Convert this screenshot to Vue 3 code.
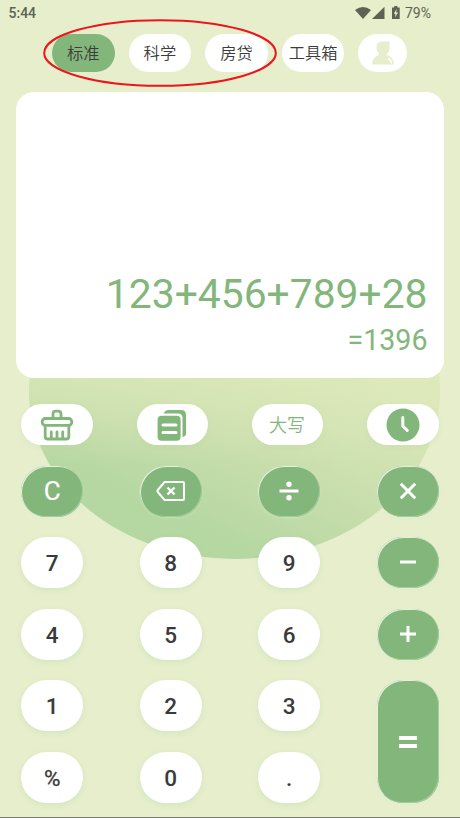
<script setup>
const tabs = ['标准', '科学', '房贷', '工具箱']
const keys = [
  { t: 'C', op: true, cls: 'clear' }, { icon: 'back', op: true }, { icon: 'div', op: true }, { icon: 'mul', op: true },
  { t: '7' }, { t: '8' }, { t: '9' }, { icon: 'sub', op: true },
  { t: '4' }, { t: '5' }, { t: '6' }, { icon: 'add', op: true },
  { t: '1' }, { t: '2' }, { t: '3' }, { icon: 'eq', op: true, cls: 'tall' },
  { t: '%', cls: 'percent' }, { t: '0' }, { t: '.' }
]
</script>

<template>
  <div class="phone">
    <div class="glow"></div>
    <header class="status">
      <span class="time">5:44</span>
      <svg class="signals" width="46" height="16" viewBox="0 0 46 16">
        <path d="M0 4Q8-2.2 16 4L8 13Z" />
        <path d="M17 13H29.5V.7Z" />
        <path d="M37 1.5h2.2V0h3.2v1.5H44.7V13H37Z" />
        <path class="bolt" d="M41.8 2.8 38.8 7.8h1.8l-.7 3.800 3.200-5h-1.900Z" />
      </svg>
      <span class="battery">79%</span>
    </header>

    <nav class="tabs">
      <button v-for="(tab, i) in tabs" :key="tab" class="tab" :class="{ active: i === 0 }">{{ tab }}</button>
      <button class="tab user">
        <svg width="24" height="24" viewBox="0 0 24 24">
          <path d="M5.500 6.500Q5.500 .5 11 .5h7.500V7q0 4-2.500 5.500v1.500q6.500 2 7 9.500H1q.5-7.500 7-9.500v-1.500Q5.500 10.500 5.500 6.500Z" />
          <path class="shine" d="M17 17.500q3.200 1.500 3.500 5" />
        </svg>
      </button>
    </nav>
    <svg class="ring" width="236" height="70" viewBox="0 0 236 70">
      <ellipse cx="118" cy="35" rx="115.800" ry="32.800" />
    </svg>

    <section class="display">
      <div class="expr">123+456+789+28</div>
      <div class="result">=1396</div>
    </section>

    <div class="tools">
      <button class="tool">
        <svg width="34" height="32" viewBox="0 0 34 32" class="line">
          <path d="M13 8.500V5q0-2.800 2.800-2.800h2.400Q21 2.200 21 5v3.500" />
          <rect x="2.200" y="9.500" width="29.600" height="6.800" rx="3" />
          <path d="M5.200 17v10.500q0 2.500 2.500 2.500h18.600q2.500 0 2.500-2.500V17M11.300 23v6.500M17 23v6.500M22.700 23v6.500" />
        </svg>
      </button>
      <button class="tool">
        <svg width="30" height="32" viewBox="0 0 30 32">
          <path class="fill" d="M6.500 4.500Q8 1 11.500 1H24q5 0 5 5v19q0 2-3.500 3V9q0-4.500-4.500-4.500Z" />
          <rect class="fill" x=".6" y="6.700" width="23" height="25" rx="4" />
          <path class="cut" d="M6 16h13M6 23.500h13" />
        </svg>
      </button>
      <button class="tool upper">大写</button>
      <button class="tool">
        <svg width="34" height="34" viewBox="0 0 34 34">
          <circle class="fill" cx="17" cy="17" r="16.500" />
          <path class="cut" d="M16.800 9.500v8.500l4.500 4.500" />
        </svg>
      </button>
    </div>

    <main class="keys">
      <button v-for="(k, i) in keys" :key="i" class="key" :class="[{ op: k.op }, k.cls]">
        <span v-if="k.t">{{ k.t }}</span>
        <svg v-else width="30" height="24" viewBox="0 0 30 24">
          <g v-if="k.icon === 'back'" class="thin">
            <path d="M8.500 3H27q1 0 1 1v16q0 1-1 1H8.500L1.800 13q-.8-1 0-2Z" />
            <path class="cross" d="m11.500 8.500 7 7m0-7-7 7" />
          </g>
          <g v-else-if="k.icon === 'div'">
            <path d="M5.500 12h19" />
            <circle cx="15" cy="5.300" r="2.700" /><circle cx="15" cy="18.700" r="2.700" />
          </g>
          <path v-else-if="k.icon === 'mul'" d="m7.800 4.800 14.400 14.400m0-14.400L7.800 19.200" />
          <path v-else-if="k.icon === 'sub'" d="M7 11h16" />
          <path v-else-if="k.icon === 'add'" d="M7 12h16M15 4v16" />
          <path v-else class="equals" d="M6 8h18M6 16h18" />
        </svg>
      </button>
    </main>
  </div>
</template>

<style>
body { margin: 0; }
</style>

<style scoped>
.phone {
  position: relative;
  box-sizing: border-box;
  width: 460px;
  height: 818px;
  overflow: hidden;
  background: #e6eecc;
  border-bottom: 1px solid #777b70;
  font-family: Roboto, "Noto Sans CJK SC", sans-serif;
}
button { border: 0; padding: 0; font-family: inherit; display: flex; align-items: center; justify-content: center; }
svg { display: block; }
.glow {
  position: absolute;
  left: 29px;
  top: 224px;
  width: 411px;
  height: 335px;
  border-radius: 50%;
  background:
    linear-gradient(180deg, #dde9bab0 45%, #dde9ba00 72%),
    linear-gradient(25deg, #b5d7a1 20%, #cbdfae 43%, #dde9ba 67%);
}
.status {
  position: relative;
  display: flex;
  height: 26px;
  align-items: center;
  padding: 0 29px 0 8.500px;
  color: #5d6352;
  font-size: 14px;
}
.time { font-weight: 500; }
.signals { margin-left: auto; margin-right: 4px; margin-top: 2px; fill: #5d6352; }
.bolt { fill: #e6eecc; }
.tabs { position: relative; display: flex; gap: 14px; padding: 8px 52px 0; }
.tab { box-sizing: border-box; width: 62.600px; height: 38px; padding-top: 1px; border-radius: 19px; background: #fff; color: #3c3c3c; font-size: 16.300px; font-weight: 350; line-height: 37px; white-space: nowrap; }
.active { background: #83b67b; }
.user { width: 49px; padding: 0; }
.user svg { fill: #e6eecc; }
.user .shine { fill: none; stroke: #fff; stroke-width: 1.500; }
.ring { position: absolute; left: 42px; top: 18px; fill: none; stroke: #ed151c; stroke-width: 2; }
.display {
  position: relative;
  box-sizing: border-box;
  width: 428px;
  height: 286px;
  margin: 20px 16px 0;
  padding: 177px 16.500px 0;
  border-radius: 18px;
  background: #fff;
  color: #83b67b;
  text-align: right;
}
.expr { font-size: 40.800px; line-height: 50px; white-space: nowrap; }
.result { font-size: 28.600px; line-height: 42px; }
.tools { position: relative; display: flex; justify-content: space-between; padding: 26px 21.400px 0; }
.tool { width: 71.700px; height: 41px; border-radius: 20.500px; background: #fff; color: #83b67b; font-size: 18px; font-weight: 350; box-shadow: 0 2px 5px #a9d39d33; }
.upper { box-sizing: border-box; padding: 0 1px 2px 0; }
.line { fill: none; stroke: #83b67b; stroke-width: 2.800; stroke-linecap: round; stroke-linejoin: round; }
.fill { fill: #83b67b; }
.cut { fill: none; stroke: #fff; stroke-width: 3; stroke-linecap: round; stroke-linejoin: round; }
.keys {
  position: relative;
  display: grid;
  grid-template-columns: repeat(4, 61.700px);
  grid-template-rows: repeat(5, 51px);
  justify-content: space-between;
  row-gap: 20.600px;
  padding: 20.500px 21.400px 0;
}
.key { box-sizing: border-box; border-radius: 25.500px; background: #fff; color: #3a3a3a; font-size: 22.500px; font-weight: 500; box-shadow: 0 2px 5px #a9d39d4d; }
.key span { padding-top: 1px; }
.op {
  background: #83b67b;
  color: #fff;
  box-shadow: inset 1px 1px .5px #e4efdf, inset -1px -1px .5px #a5cd9d, 0 1px 3px #d9efd566;
}
.clear { font-size: 26px; font-weight: 400; -webkit-text-stroke: .15px #fff; }
.clear span { padding-top: 0; }
.percent { font-weight: 400; -webkit-text-stroke: .3px #3a3a3a; }
.tall { grid-column: 4; grid-row: 4 / 6; border-radius: 26px; }
.key svg { fill: none; stroke: #fff; stroke-width: 3; }
.key circle { fill: #fff; stroke: none; }
.key .thin { stroke-width: 2; }
.key .cross { stroke-width: 2.400; }
.key .equals { stroke-width: 4; }
</style>
